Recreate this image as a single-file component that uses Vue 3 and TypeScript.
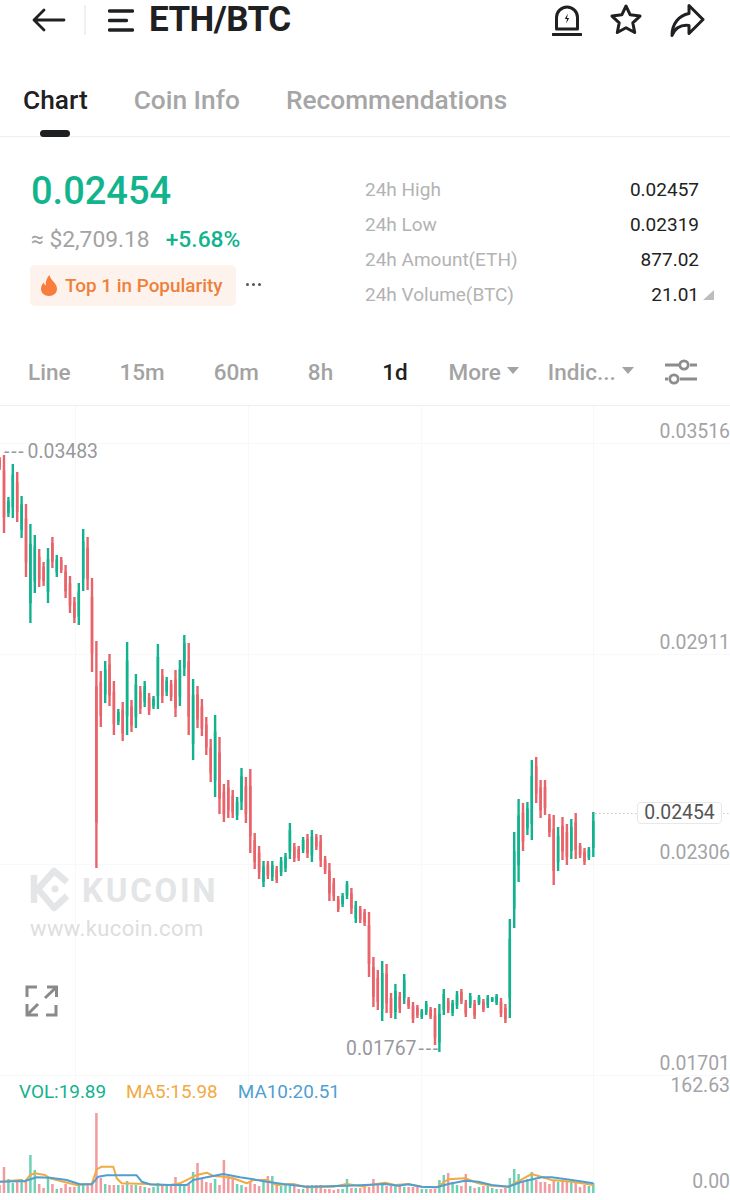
<script setup lang="ts">
import { computed } from 'vue';

type Side = 'g' | 'r';
type Candle = [number, number, Side];

const tabs = ['Chart', 'Coin Info', 'Recommendations'];

const stats = [
  { label: '24h High', value: '0.02457' },
  { label: '24h Low', value: '0.02319' },
  { label: '24h Amount(ETH)', value: '877.02' },
  { label: '24h Volume(BTC)', value: '21.01' }
];

// wick top, wick bottom (page y, the svg starts at 406)
const candles: Candle[] = [
  [457, 470, 'r'], [455, 533, 'r'], [497, 517, 'g'], [464, 518, 'g'], [472, 522, 'r'], [496, 538, 'g'],
  [504, 577, 'r'], [524, 623, 'g'], [535, 593, 'g'], [549, 587, 'r'], [562, 586, 'r'], [548, 603, 'g'],
  [537, 568, 'r'], [555, 577, 'g'], [557, 573, 'r'], [565, 598, 'r'], [576, 613, 'r'], [597, 623, 'r'],
  [583, 625, 'g'], [529, 591, 'g'], [537, 590, 'r'], [578, 672, 'r'], [641, 868, 'r'], [671, 727, 'r'],
  [661, 703, 'g'], [654, 706, 'r'], [681, 735, 'r'], [709, 725, 'g'], [702, 741, 'r'], [642, 735, 'g'],
  [700, 732, 'r'], [674, 728, 'g'], [686, 714, 'r'], [681, 707, 'g'], [693, 715, 'r'], [696, 709, 'g'],
  [644, 709, 'g'], [669, 703, 'r'], [677, 696, 'g'], [680, 701, 'r'], [670, 717, 'r'], [660, 706, 'g'],
  [635, 676, 'g'], [643, 735, 'r'], [679, 760, 'g'], [686, 728, 'r'], [699, 736, 'r'], [717, 755, 'r'],
  [739, 782, 'r'], [715, 797, 'g'], [737, 814, 'r'], [784, 822, 'r'], [780, 818, 'r'], [790, 818, 'r'],
  [797, 820, 'g'], [768, 810, 'g'], [777, 823, 'r'], [769, 853, 'r'], [833, 869, 'r'], [846, 879, 'r'],
  [861, 887, 'g'], [861, 879, 'r'], [861, 881, 'g'], [866, 883, 'r'], [857, 876, 'g'], [853, 872, 'g'],
  [823, 859, 'g'], [843, 862, 'r'], [846, 861, 'r'], [837, 853, 'g'], [834, 858, 'r'], [830, 862, 'g'],
  [834, 850, 'r'], [835, 867, 'r'], [856, 874, 'r'], [863, 901, 'r'], [878, 901, 'r'], [896, 912, 'r'],
  [893, 907, 'g'], [881, 899, 'g'], [888, 914, 'r'], [901, 923, 'g'], [906, 923, 'r'], [909, 926, 'r'],
  [912, 977, 'r'], [957, 1007, 'r'], [970, 1010, 'r'], [961, 1021, 'g'], [964, 1013, 'r'], [993, 1018, 'r'],
  [984, 1019, 'g'], [992, 1013, 'r'], [974, 1004, 'g'], [997, 1009, 'r'], [1002, 1023, 'r'], [1005, 1018, 'r'],
  [1009, 1019, 'g'], [1001, 1015, 'g'], [1007, 1019, 'r'], [1008, 1045, 'r'], [1004, 1052, 'g'], [989, 1015, 'g'],
  [998, 1013, 'r'], [1000, 1016, 'g'], [991, 1009, 'g'], [989, 1004, 'r'], [1000, 1017, 'r'], [993, 1008, 'g'],
  [1000, 1019, 'r'], [995, 1005, 'g'], [999, 1012, 'r'], [995, 1008, 'g'], [997, 1002, 'g'], [994, 1005, 'g'],
  [998, 1017, 'r'], [1004, 1023, 'r'], [919, 1018, 'g'], [832, 928, 'g'], [799, 882, 'g'], [803, 851, 'r'],
  [802, 835, 'g'], [760, 840, 'g'], [757, 803, 'r'], [780, 818, 'r'], [780, 815, 'r'], [814, 837, 'r'],
  [815, 885, 'r'], [827, 871, 'g'], [817, 860, 'r'], [824, 865, 'r'], [819, 859, 'g'], [813, 859, 'r'],
  [843, 858, 'r'], [848, 865, 'r'], [847, 860, 'g'], [812, 857, 'g']
];

const volumes = [
  8, 26, 14, 10, 12, 14, 12, 38, 23, 9, 5, 15, 9, 4, 5, 9, 6, 6, 8, 8, 8, 10, 80, 15, 9, 8, 8, 8, 8, 12, 8, 8, 7, 6,
  5, 6, 10, 7, 7, 7, 16, 8, 8, 9, 21, 30, 14, 11, 10, 14, 8, 33, 17, 14, 9, 8, 6, 12, 9, 7, 11, 17, 17, 9, 7, 9, 10,
  9, 4, 4, 8, 8, 8, 8, 4, 4, 3, 4, 4, 14, 5, 5, 5, 6, 6, 14, 8, 10, 7, 7, 7, 7, 6, 6, 6, 6, 4, 4, 4, 4, 13, 18, 20,
  11, 8, 7, 19, 7, 5, 6, 7, 7, 5, 4, 4, 5, 15, 24, 19, 11, 14, 21, 13, 11, 11, 9, 12, 11, 11, 12, 12, 10, 6, 8, 7, 10
];

const stepX = 4.398;
const candleX = (i: number) => +(i * stepX - 0.4).toFixed(1);
const toChartY = (y: number) => y - 406;

const bars = computed(() =>
  candles.map(([top, bottom, side], i) => {
    const pad = (bottom - top) * 0.2;
    return {
      x: candleX(i),
      y1: toChartY(top),
      y2: toChartY(bottom),
      by1: toChartY(top + pad),
      by2: toChartY(bottom - pad),
      side,
      volY: 1193 - 406 - volumes[i]
    };
  })
);

// read off the 3x crops: [x, y] in crop pixels
const ma5Left = [[0,335],[60,330],[75,335],[90,315],[105,310],[135,315],[150,325],[190,335],[230,345],[275,342],[290,298],[305,290],[340,290],[350,325],[365,340],[440,342],[470,345],[510,345],[540,340],[570,325],[590,315],[620,308],[640,318],[670,320],[700,325],[740,340],[760,330],[800,330],[830,345],[880,342],[920,352],[1000,350],[1040,342],[1095,350]];
const ma5Right = [[0,347],[60,338],[90,345],[130,342],[170,350],[215,352],[250,328],[300,325],[340,340],[380,347],[430,350],[500,312],[560,330],[620,335],[685,345]];
const ma10Left = [[0,335],[75,333],[110,322],[150,323],[200,330],[240,343],[275,343],[295,320],[320,316],[410,316],[425,335],[450,343],[510,345],[560,345],[580,330],[620,322],[670,312],[720,322],[760,328],[800,335],[850,342],[920,350],[1040,347],[1095,345]];
const ma10Right = [[0,345],[60,342],[100,347],[130,343],[170,350],[215,352],[250,342],[300,332],[340,335],[380,345],[430,350],[470,335],[530,322],[560,322],[620,330],[685,340]];

const toPoints = (left: number[][], right: number[][]) =>
  [
    ...left.map(([x, y]) => [x / 3, y / 3 + 1070 - 406]),
    ...right.map(([x, y]) => [x / 3 + 365, y / 3 + 1070 - 406])
  ]
    .map(([x, y]) => `${x.toFixed(1)},${y.toFixed(1)}`)
    .join(' ');

const ma5Points = toPoints(ma5Left, ma5Right);
const ma10Points = toPoints(ma10Left, ma10Right);
</script>

<template>
  <div class="screen">
    <header class="topbar">
      <svg class="back" width="34" height="26" viewBox="0 0 34 26">
        <path d="M32 13H2M12 3 2 13l10 10" />
      </svg>
      <span class="divider"></span>
      <svg class="menu" width="26" height="24" viewBox="0 0 26 24">
        <path d="M1.5 3h23M1.5 12.500h17M1.500 22h23" />
      </svg>
      <h1 class="pair">ETH/BTC</h1>
      <div class="actions">
        <svg class="icon alarm" width="30" height="32" viewBox="0 0 30 32">
          <path d="M4.500 25V13.500a10.500 10.500 0 0 1 21 0V25z" />
          <path class="rule" d="M1 30.500h28" />
          <path class="bolt" d="M15.800 9.500 12.800 15h2.200l-.8 4.500 3-5.500H15z" />
        </svg>
        <svg class="icon star" width="32" height="32" viewBox="0 0 32 32">
          <path d="M16 2l4.200 8.800 9.800 1.300-7.200 6.700 1.900 9.700L16 23.800 7.300 28.500l1.900-9.700L2 12.100l9.800-1.300z" />
        </svg>
        <svg class="icon share" width="36" height="34" viewBox="0 0 36 34">
          <path d="M19 2.500 33 16.500 19 30.500v-8C11 21.500 5 25.500 2 32.500 2 20.500 9 12.500 19 10.500z" />
        </svg>
      </div>
    </header>

    <nav class="tabs">
      <span v-for="(tab, i) in tabs" :key="tab" class="tab" :class="{ active: i === 0 }">{{ tab }}</span>
    </nav>

    <section class="summary">
      <div class="quote">
        <div class="price">0.02454</div>
        <div class="sub">
          <span class="fiat">≈ $2,709.18</span>
          <span class="change">+5.68%</span>
        </div>
        <div class="tag-row">
          <div class="tag">
            <svg width="18" height="21" viewBox="0 0 18 21">
              <path d="M9.500 0c.8 3.300 2.400 4.800 4.300 7 1.800 2.100 3.200 4.300 3.200 6.800C17 18 13.500 21 9 21s-8-3-8-7.200c0-2.600 1.200-4.700 2.900-6.300.2 1.500.8 2.500 1.900 3.100C5.400 6.700 6.700 2.800 9.500 0z" />
            </svg>
            <span>Top 1 in Popularity</span>
          </div>
          <span class="more-dots"><i></i><i></i><i></i></span>
        </div>
      </div>
      <div class="stats">
        <div v-for="(row, i) in stats" :key="row.label" class="stat">
          <span class="stat-label">{{ row.label }}</span>
          <span class="stat-value">{{ row.value }}</span>
          <svg v-if="i === 3" class="corner" width="12" height="10" viewBox="0 0 12 10">
            <path d="M11 0v10H0z" />
          </svg>
        </div>
      </div>
    </section>

    <div class="intervals">
      <span class="iv iv-line">Line</span>
      <span class="iv iv-15">15m</span>
      <span class="iv iv-60">60m</span>
      <span class="iv iv-8">8h</span>
      <span class="iv iv-1d">1d</span>
      <span class="iv iv-more">More<b class="caret"></b></span>
      <span class="iv iv-ind">Indic...<b class="caret"></b></span>
      <svg class="sliders" width="34" height="28" viewBox="0 0 34 28">
        <path d="M1 7h14M26 7h7M1 21h3M16 21h17" />
        <circle cx="20" cy="7" r="4.200" />
        <circle cx="10" cy="21" r="4.200" />
      </svg>
    </div>

    <div class="chart">
      <svg class="canvas" width="730" height="794" viewBox="0 0 730 794">
        <g class="grid">
          <path d="M0 37.500h730M0 248.500h730M0 458.500h730M0 669.500h730" />
          <path d="M75.500 0v787M248.500 0v787M421.500 0v787M593.500 0v787" />
        </g>
        <line class="last-line" x1="595" y1="407.500" x2="730" y2="407.500" />
        <g v-for="bar in bars" :key="bar.x" :class="bar.side === 'g' ? 'up' : 'down'">
          <line class="vol" :x1="bar.x" :x2="bar.x" :y1="bar.volY" y2="787" />
          <line class="wick" :x1="bar.x" :x2="bar.x" :y1="bar.y1" :y2="bar.y2" />
          <line class="body" :x1="bar.x" :x2="bar.x" :y1="bar.by1" :y2="bar.by2" />
        </g>
        <polyline class="ma ma5" :points="ma5Points" />
        <polyline class="ma ma10" :points="ma10Points" />
        <g class="mark-logo">
          <path d="M34 469v28" />
          <path d="M67 476 54 465 38 483l16 19 13-12" />
          <circle cx="55" cy="483" r="3.500" />
        </g>
        <path class="expand" d="M27 591v-10h10M47 581h9.500v10M56.500 581 45 592M27 598v11h11M27 609l11-11M56 599v10H46" />
      </svg>

      <span class="axis" style="top: 15px">0.03516</span>
      <span class="axis" style="top: 226px">0.02911</span>
      <span class="axis" style="top: 436px">0.02306</span>
      <span class="axis" style="top: 647px">0.01701</span>
      <span class="axis" style="top: 669px">162.63</span>
      <span class="axis" style="top: 765px">0.00</span>

      <span class="last-price">0.02454</span>
      <span class="extreme high"><i class="dash">---</i>0.03483</span>
      <span class="extreme low">0.01767<i class="dash">---</i></span>

      <span class="brand">KUCOIN</span>
      <span class="site">www.kucoin.com</span>

      <div class="legend">
        <span class="l-vol">VOL:19.89</span>
        <span class="l-ma5">MA5:15.98</span>
        <span class="l-ma10">MA10:20.51</span>
      </div>
    </div>
  </div>
</template>

<style scoped>
.screen {
  width: 730px;
  height: 1200px;
  overflow: hidden;
  background: #fff;
  font-family: Roboto, "Liberation Sans", sans-serif;
  color: #1f2022;
}

.topbar {
  display: flex;
  align-items: center;
  height: 39px;
  padding-left: 32px;
}

.back path,
.menu path {
  fill: none;
  stroke: #1f2022;
  stroke-linecap: round;
  stroke-linejoin: round;
}

.back path {
  stroke-width: 2.8;
}

.menu path {
  stroke-width: 3.4;
}

.divider {
  width: 2px;
  height: 30px;
  margin: 0 22px 0 18px;
  background: #f0f0f0;
}

.pair {
  margin: 0 0 0 15px;
  font-size: 35px;
  font-weight: 700;
  letter-spacing: -0.55px;
  line-height: 39px;
}

.actions {
  display: flex;
  align-items: center;
  gap: 28px;
  margin-left: auto;
  padding-right: 24px;
}

.icon path {
  fill: none;
  stroke: #1f2022;
  stroke-width: 3;
  stroke-linejoin: round;
  stroke-linecap: round;
}

.icon .bolt {
  fill: #1f2022;
  stroke: none;
}

.tabs {
  display: flex;
  gap: 46px;
  height: 98px;
  padding: 46px 0 0 23px;
  box-sizing: border-box;
  border-bottom: 1px solid #eee;
}

.tab {
  position: relative;
  font-size: 26.300px;
  font-weight: 500;
  line-height: 30px;
  color: #a6a6a6;
}

.tab.active {
  color: #1f2022;
}

.tab.active::after {
  content: "";
  position: absolute;
  left: 17px;
  top: 45px;
  width: 30px;
  height: 7px;
  border-radius: 4px;
  background: #1f2022;
}

.summary {
  display: flex;
  height: 208px;
  box-sizing: border-box;
  padding: 35px 31px 0 30px;
}

.quote {
  width: 335px;
}

.price {
  margin-left: 1px;
  font-size: 38px;
  font-weight: 500;
  line-height: 38px;
  color: #12b48e;
}

.sub {
  display: flex;
  gap: 16px;
  margin: 17px 0 0 1px;
  font-size: 22.800px;
  line-height: 26px;
}

.fiat {
  color: #a3a3a3;
}

.change {
  font-weight: 500;
  color: #12b48e;
}

.tag-row {
  display: flex;
  align-items: center;
  margin-top: 12px;
}

.tag {
  display: flex;
  align-items: center;
  gap: 7px;
  width: 206px;
  height: 41px;
  box-sizing: border-box;
  padding-left: 10px;
  border-radius: 5px;
  background: #fdf3ec;
  font-size: 18.900px;
  font-weight: 500;
  color: #ee7f3c;
}

.tag svg path {
  fill: #f97c3c;
}

.more-dots {
  display: flex;
  gap: 3px;
  margin-left: 10px;
  margin-bottom: 2px;
}

.more-dots i {
  width: 3px;
  height: 3px;
  border-radius: 50%;
  background: #555;
}

.stats {
  flex: 1;
}

.stat {
  position: relative;
  display: flex;
  justify-content: space-between;
  height: 35px;
  font-size: 19px;
  line-height: 35px;
}

.stat-label {
  color: #b3b3b3;
}

.stat-value {
  color: #222;
}

.corner {
  position: absolute;
  right: -16px;
  top: 13px;
}

.corner path {
  fill: #bdbdbd;
}

.intervals {
  display: flex;
  align-items: center;
  height: 61px;
  box-sizing: border-box;
  padding: 0 0 6px 28px;
  border-bottom: 1px solid #eee;
  font-size: 22.500px;
  font-weight: 500;
  color: #a3a3a3;
}

.iv {
  display: flex;
  align-items: center;
  line-height: 54px;
}

.iv-15 {
  margin-left: 49px;
}

.iv-60 {
  margin-left: 49px;
}

.iv-8 {
  margin-left: 49px;
}

.iv-1d {
  margin-left: 49px;
  color: #1f2022;
}

.iv-more {
  margin-left: 41px;
}

.iv-ind {
  margin-left: 29px;
}

.caret {
  width: 0;
  height: 0;
  margin: 0 0 3px 6px;
  border-style: solid;
  border-width: 7px 6.500px 0;
  border-color: #a3a3a3 transparent transparent;
}

.sliders {
  margin-left: 30px;
}

.sliders path,
.sliders circle {
  fill: none;
  stroke: #8c8c8c;
  stroke-width: 2.800;
}

.chart {
  position: relative;
  height: 794px;
}

.canvas {
  position: absolute;
  inset: 0;
}

.grid path {
  fill: none;
  stroke: #f8f8f8;
  stroke-width: 1;
}

.last-line {
  stroke: #c8c8c8;
  stroke-width: 1;
  stroke-dasharray: 1.500 2.500;
}

.wick {
  stroke-width: 2.400;
}

.body {
  stroke-width: 2.600;
}

.up .wick,
.up .body {
  stroke: #13b28e;
}

.down .wick,
.down .body {
  stroke: #e8636a;
}

.vol {
  stroke-width: 2.500;
}

.up .vol {
  stroke: #6fd0b6;
}

.down .vol {
  stroke: #f29a9e;
}

.ma {
  fill: none;
  stroke-width: 2;
  stroke-linejoin: round;
}

.ma5 {
  stroke: #f2aa42;
}

.ma10 {
  stroke: #4f9fd2;
}

.mark-logo path {
  fill: none;
  stroke: #e3e5e7;
  stroke-width: 6.500;
  stroke-linejoin: round;
}

.mark-logo circle {
  fill: #e3e5e7;
}

.expand {
  fill: none;
  stroke: #8a8a8a;
  stroke-width: 3;
}

.axis {
  position: absolute;
  right: 0;
  font-size: 19.400px;
  line-height: 22px;
  color: #a3a3a8;
}

.last-price {
  position: absolute;
  left: 637px;
  top: 396px;
  width: 85px;
  height: 22px;
  box-sizing: border-box;
  border: 1px solid #e8e8e8;
  border-radius: 4px;
  background: #fff;
  font-size: 19.400px;
  line-height: 20px;
  text-align: center;
  color: #555;
}

.extreme {
  position: absolute;
  display: flex;
  gap: 2px;
  font-size: 19.400px;
  line-height: 22px;
  white-space: nowrap;
  color: #98989d;
}

.dash {
  font-style: normal;
  letter-spacing: 1.800px;
}

.high {
  left: 4px;
  top: 35px;
}

.low {
  left: 346px;
  top: 632px;
}

.brand {
  position: absolute;
  left: 82px;
  top: 465px;
  font-size: 33px;
  font-weight: 700;
  line-height: 40px;
  letter-spacing: 2.700px;
  color: #e3e5e7;
}

.site {
  position: absolute;
  left: 30px;
  top: 510px;
  font-size: 22px;
  line-height: 26px;
  letter-spacing: 0.4px;
  color: #dcdee0;
}

.legend {
  position: absolute;
  left: 19px;
  top: 675px;
  display: flex;
  gap: 20px;
  font-size: 18.900px;
  line-height: 22px;
}

.l-vol {
  color: #13b28e;
}

.l-ma5 {
  color: #f2aa42;
}

.l-ma10 {
  color: #4f9fd2;
}
</style>

<style>
html,
body {
  margin: 0;
  overflow: hidden;
}
</style>
